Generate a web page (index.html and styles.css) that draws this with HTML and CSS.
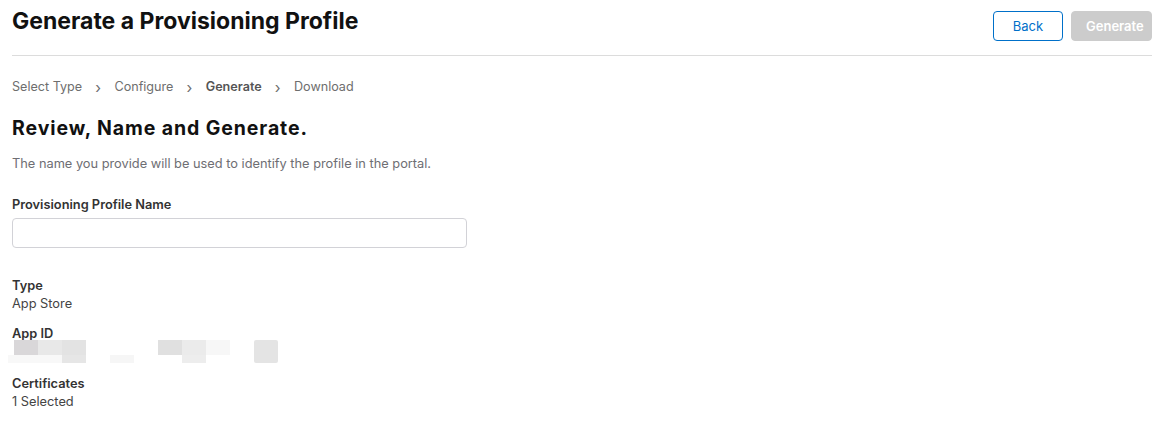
FILE: index.html
```html
<!DOCTYPE html>
<html lang="en">
<head>
  <meta charset="UTF-8" />
  <title>Generate a Provisioning Profile</title>
  <link rel="stylesheet" href="styles.css">
</head>
<body>
  <div class="header">
    <h1>Generate a Provisioning Profile</h1>
    <div class="actions">
      <button class="back">Back</button>
      <button class="generate" disabled>Generate</button>
    </div>
  </div>

  <div class="crumbs">
    <span>Select Type</span><span class="sep">&#x203A;</span>
    <span>Configure</span><span class="sep">&#x203A;</span>
    <span class="current">Generate</span><span class="sep">&#x203A;</span>
    <span>Download</span>
  </div>

  <h2>Review, Name and Generate.</h2>
  <p class="desc">The name you provide will be used to identify the profile in the portal.</p>

  <label class="field-label" for="profileName">Provisioning Profile Name</label>
  <input type="text" id="profileName" class="name-input" />

  <div class="info">
    <div class="item">
      <div class="label">Type</div>
      <div class="value">App Store</div>
    </div>
    <div class="item">
      <div class="label">App ID</div>
      <svg class="mosaic" width="280" height="23" viewBox="0 0 280 23">
        <rect x="14" y="0" width="24" height="15" fill="#d9d7d9" />
        <rect x="38" y="0" width="24" height="15" fill="#e8e8e8" />
        <rect x="62" y="0" width="24" height="15" fill="#e3e3e3" />
        <rect x="8" y="15" width="54" height="8" fill="#f8f8f8" />
        <rect x="62" y="15" width="24" height="8" fill="#e6e6e6" />
        <rect x="110" y="15" width="24" height="8" fill="#f6f6f6" />
        <rect x="158" y="0" width="24" height="15" fill="#e0e0e0" />
        <rect x="182" y="0" width="24" height="15" fill="#ebebeb" />
        <rect x="206" y="0" width="24" height="15" fill="#f7f7f7" />
        <rect x="182" y="15" width="24" height="8" fill="#ededed" />
        <rect x="254" y="0" width="24" height="23" rx="2" fill="#e4e4e4" />
      </svg>
    </div>
    <div class="item">
      <div class="label">Certificates</div>
      <div class="value">1 Selected</div>
    </div>
  </div>
</body>
</html>
```

FILE: styles.css
```css
body {
  font-family: Inter, "Liberation Sans", sans-serif;
  background: #fff;
  color: #333;
  margin: 0;
  padding: 0 22px 0 12px;
}
.header {
  display: flex;
  justify-content: space-between;
  align-items: flex-start;
  padding-top: 5px;
  padding-bottom: 14px;
  border-bottom: 1px solid #dcdcdc;
}
h1 {
  margin: 0;
  font-size: 23px;
  font-weight: 700;
  color: #111;
  line-height: 32px;
}
.actions {
  display: flex;
  gap: 8px;
  padding-top: 6px;
}
button {
  font-family: Inter, "Liberation Sans", sans-serif;
  font-size: 13px;
  height: 30px;
  border-radius: 4px;
  padding: 0 14px;
}
.back {
  width: 70px;
  margin-left: 1px;
  background: #fff;
  color: #0070c9;
  border: 1px solid #0070c9;
}
.generate {
  width: 81px;
  background: #cccccc;
  color: #fff;
  border: 1px solid #cccccc;
  font-weight: 600;
}
.crumbs {
  margin-top: 21px;
  font-size: 12.6px;
  color: #6e6e6e;
  line-height: 18px;
}
.crumbs .sep {
  display: inline-block;
  margin: 0 10px 0 13px;
  font-size: 15px;
  position: relative;
  top: 2px;
}
.crumbs .current {
  font-weight: 600;
  color: #555;
}
h2 {
  margin: 20px 0 0;
  font-size: 19.5px;
  font-weight: 700;
  letter-spacing: 0.9px;
  color: #111;
  line-height: 24px;
}
.desc {
  margin: 16px 0 0;
  font-size: 12.8px;
  color: #6e6e73;
  line-height: 16px;
}
.field-label {
  display: block;
  margin-top: 25px;
  font-size: 12.8px;
  font-weight: 600;
  color: #333;
  line-height: 16px;
}
.name-input {
  display: block;
  margin-top: 5px;
  width: 455px;
  height: 30px;
  box-sizing: border-box;
  border: 1px solid #d2d2d7;
  border-radius: 4px;
}
.info {
  margin-top: 30px;
  display: flex;
  flex-direction: column;
  gap: 13px;
}
.label {
  font-size: 12.8px;
  font-weight: 600;
  color: #333;
  line-height: 16px;
}
.value {
  font-size: 12.8px;
  color: #444;
  line-height: 18px;
  margin-top: 1px;
}
.mosaic {
  display: block;
  margin: -2px 0 0 -12px;
}
```
